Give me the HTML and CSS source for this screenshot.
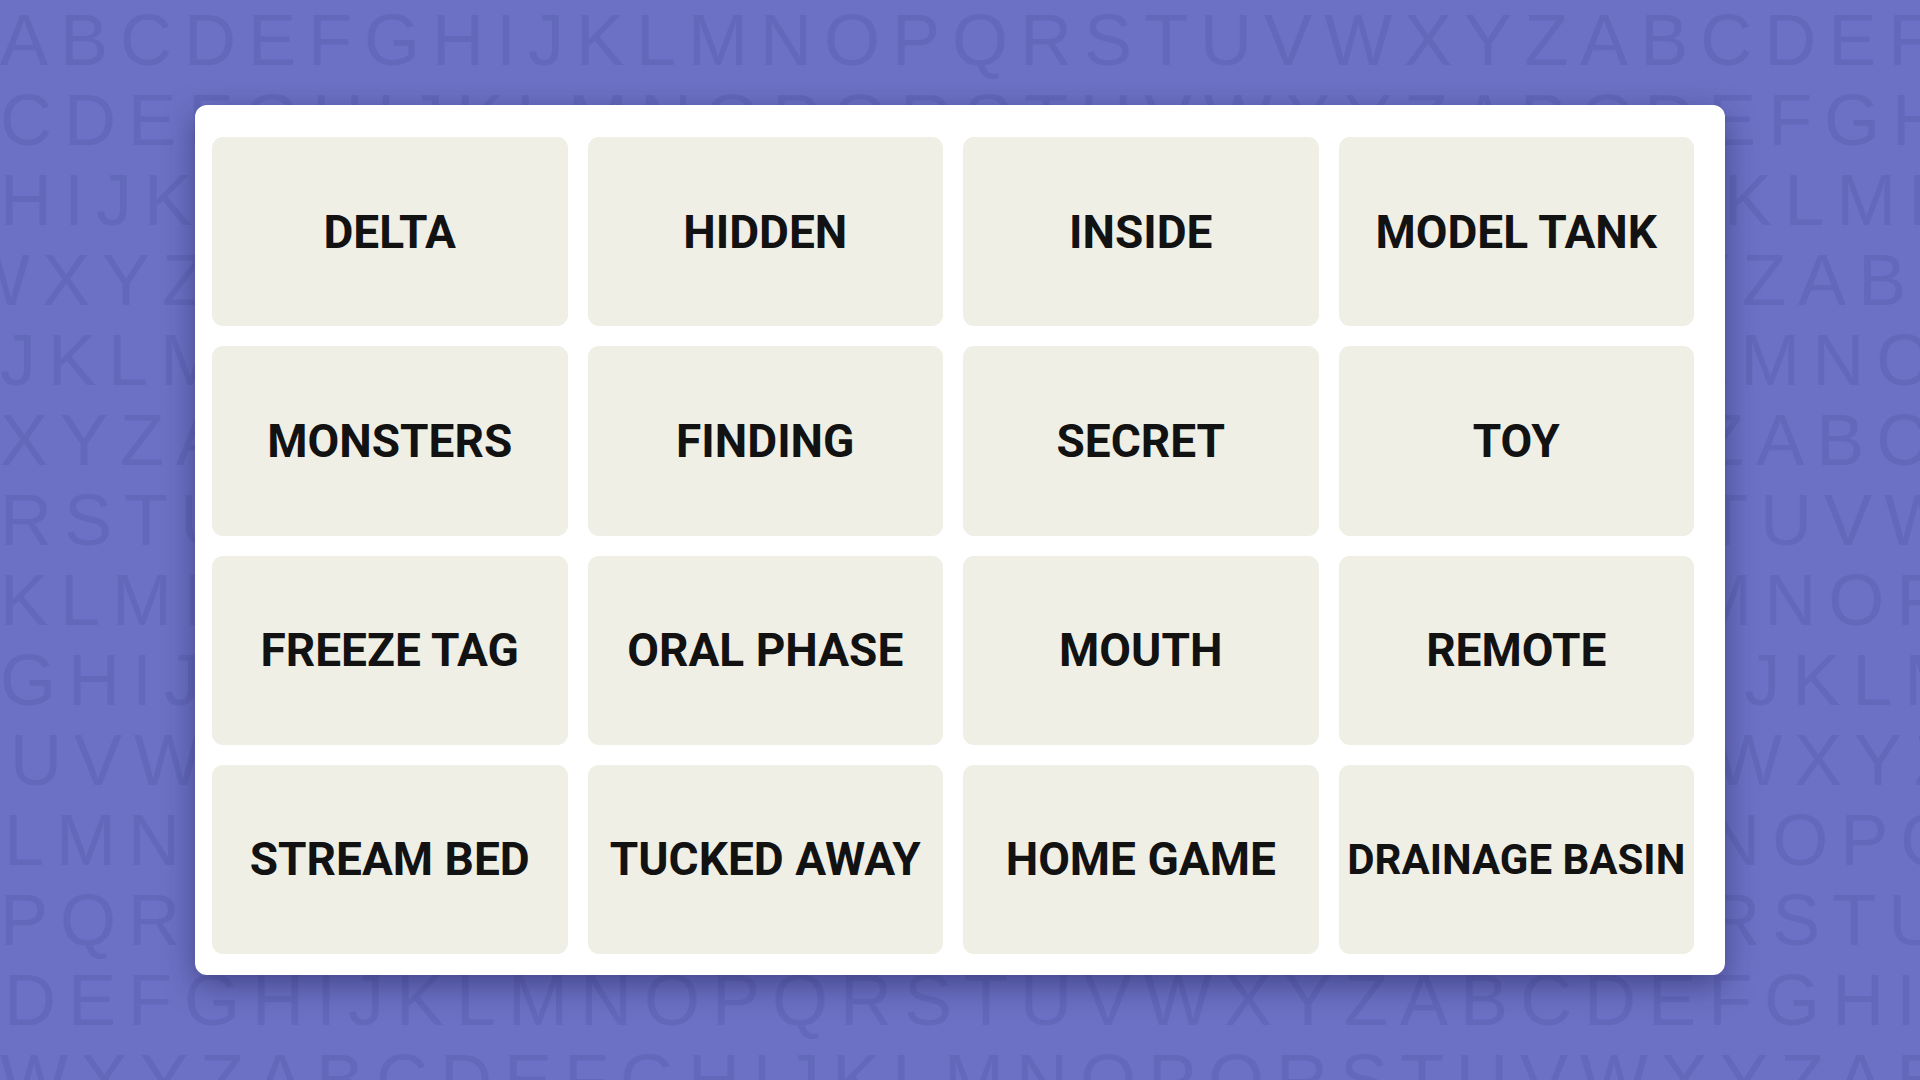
FILE: index.html
```html
<!DOCTYPE html>
<html lang="en">
<head>
<meta charset="utf-8">
<title>Connections</title>
<link rel="stylesheet" href="styles.css">
</head>
<body>
<div class="stage">
  <div class="letters" aria-hidden="true">
    <div class="row">ABCDEFGHIJKLMNOPQRSTUVWXYZABCDEFGH</div>
    <div class="row">CDEFGHIJKLMNOPQRSTUVWXYZABCDEFGHIJ</div>
    <div class="row">HIJKLMNOPQRSTUVWXYZABCDEFGHIJKLMNO</div>
    <div class="row shift-w">WXYZABCDEFGHIJKLMNOPQRSTUVWXYZABCD</div>
    <div class="row">JKLMNOPQRSTUVWXYZABCDEFGHIJKLMNOPQ</div>
    <div class="row">XYZABCDEFGHIJKLMNOPQRSTUVWXYZABCDE</div>
    <div class="row">RSTUVWXYZABCDEFGHIJKLMNOPQRSTUVWXY</div>
    <div class="row">KLMNOPQRSTUVWXYZABCDEFGHIJKLMNOPQR</div>
    <div class="row">GHIJKLMNOPQRSTUVWXYZABCDEFGHIJKLMN</div>
    <div class="row shift-s">UVWXYZABCDEFGHIJKLMNOPQRSTUVWXYZAB</div>
    <div class="row shift-xs">LMNOPQRSTUVWXYZABCDEFGHIJKLMNOPQRS</div>
    <div class="row">PQRSTUVWXYZABCDEFGHIJKLMNOPQRSTUVW</div>
    <div class="row shift-xs">DEFGHIJKLMNOPQRSTUVWXYZABCDEFGHIJK</div>
    <div class="row">WXYZABCDEFGHIJKLMNOPQRSTUVWXYZABCD</div>
  </div>

  <main class="board">
    <div class="grid">
      <div class="tile">DELTA</div>
      <div class="tile">HIDDEN</div>
      <div class="tile">INSIDE</div>
      <div class="tile">MODEL TANK</div>
      <div class="tile">MONSTERS</div>
      <div class="tile">FINDING</div>
      <div class="tile">SECRET</div>
      <div class="tile">TOY</div>
      <div class="tile">FREEZE TAG</div>
      <div class="tile">ORAL PHASE</div>
      <div class="tile">MOUTH</div>
      <div class="tile">REMOTE</div>
      <div class="tile">STREAM BED</div>
      <div class="tile">TUCKED AWAY</div>
      <div class="tile">HOME GAME</div>
      <div class="tile tile-long">DRAINAGE BASIN</div>
    </div>
  </main>
</div>
</body>
</html>
```

FILE: styles.css
```css
* {
  box-sizing: border-box;
}

html,
body {
  margin: 0;
  height: 100%;
}

body {
  background: #6c71c5;
  overflow: hidden;
}

/* backdrop letters and the board share one grid cell */
.stage {
  display: grid;
  width: 1920px;
  height: 1080px;
  overflow: hidden;
}

.letters,
.board {
  grid-area: 1 / 1;
}

.letters {
  display: flex;
  flex-direction: column;
  font-family: "Liberation Sans", Arial, sans-serif;
  font-size: 72px;
  line-height: 80px;
  letter-spacing: 12px;
  color: #6368bb;
  white-space: nowrap;
  overflow: hidden;
  user-select: none;
}

.shift-w {
  margin-left: -38px;
}

.shift-s {
  margin-left: 10px;
}

.shift-xs {
  margin-left: 4px;
}

.board {
  place-self: center;
  width: 1530px;
  height: 870px;
  padding: 32px 31px 21px 17px;
  background: #ffffff;
  border-radius: 12px;
  box-shadow: 0 10px 30px rgba(30, 30, 80, 0.5);
}

.grid {
  display: grid;
  grid-template-columns: repeat(4, 1fr);
  grid-template-rows: repeat(4, 1fr);
  gap: 20px;
  height: 100%;
}

.tile {
  display: flex;
  align-items: center;
  justify-content: center;
  background: #efefe6;
  border-radius: 11px;
  color: #121212;
  font-family: Roboto, "Liberation Sans", Arial, sans-serif;
  font-weight: 700;
  font-size: 46px;
  text-transform: uppercase;
  white-space: nowrap;
}

.tile-long {
  font-size: 42px;
}
```
